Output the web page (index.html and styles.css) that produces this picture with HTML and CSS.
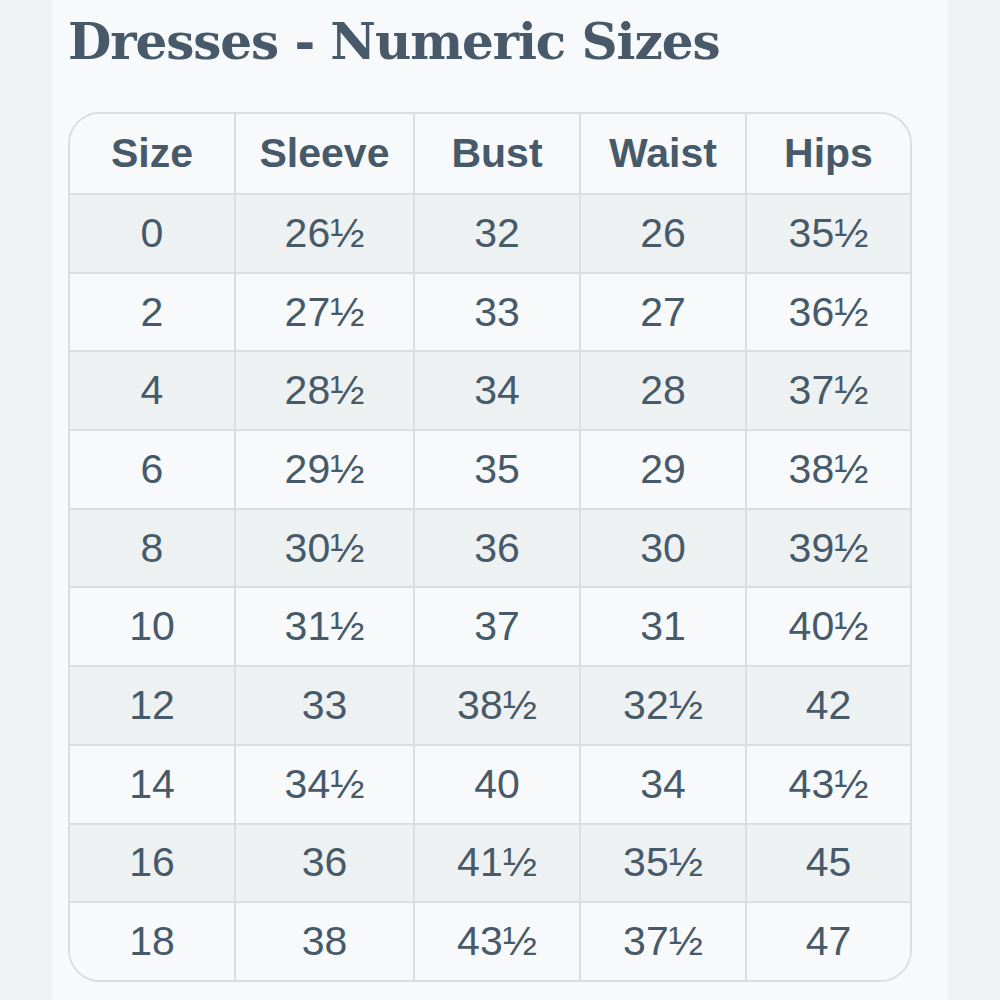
FILE: index.html
```html
<!DOCTYPE html>
<html>
<head>
<meta charset="utf-8">
<link rel="stylesheet" href="styles.css">
</head>
<body>
<div class="page">
  <h1 class="title">Dresses - Numeric Sizes</h1>
  <table class="chart">
    <colgroup>
      <col class="c1"><col class="c2"><col class="c3"><col class="c4"><col class="c5">
    </colgroup>
    <thead>
      <tr><th>Size</th><th>Sleeve</th><th>Bust</th><th>Waist</th><th>Hips</th></tr>
    </thead>
    <tbody>
      <tr><td>0</td><td>26½</td><td>32</td><td>26</td><td>35½</td></tr>
      <tr><td>2</td><td>27½</td><td>33</td><td>27</td><td>36½</td></tr>
      <tr><td>4</td><td>28½</td><td>34</td><td>28</td><td>37½</td></tr>
      <tr><td>6</td><td>29½</td><td>35</td><td>29</td><td>38½</td></tr>
      <tr><td>8</td><td>30½</td><td>36</td><td>30</td><td>39½</td></tr>
      <tr><td>10</td><td>31½</td><td>37</td><td>31</td><td>40½</td></tr>
      <tr><td>12</td><td>33</td><td>38½</td><td>32½</td><td>42</td></tr>
      <tr><td>14</td><td>34½</td><td>40</td><td>34</td><td>43½</td></tr>
      <tr><td>16</td><td>36</td><td>41½</td><td>35½</td><td>45</td></tr>
      <tr><td>18</td><td>38</td><td>43½</td><td>37½</td><td>47</td></tr>
    </tbody>
  </table>
</div>
</body>
</html>
```
FILE: styles.css
```css
html, body {
  margin: 0;
  padding: 0;
  background: #eff1f3;
}
.page {
  width: 896px;
  min-height: 1000px;
  margin: 0 auto;
  box-sizing: border-box;
  padding: 0 16px;
  background: #f7f9fb;
  color: #475a69;
}
.title {
  margin: 0;
  padding-top: 12px;
  height: 112px;
  box-sizing: border-box;
  font-family: "DejaVu Serif", serif;
  font-weight: bold;
  font-size: 50px;
  line-height: 60px;
  letter-spacing: -1.1px;
  color: #485a6a;
}
.chart {
  width: 844px;
  table-layout: fixed;
  border-collapse: separate;
  border-spacing: 0;
  border: 2px solid #dcdddf;
  border-radius: 32px;
  overflow: hidden;
  font-family: "Liberation Sans", Arial, sans-serif;
  font-size: 41px;
  color: #475a69;
}
.c1 { width: 166px; }
.c2 { width: 179px; }
.c3 { width: 166px; }
.c4 { width: 166px; }
.c5 { width: 163px; }
.chart th, .chart td {
  padding: 0;
  text-align: center;
  vertical-align: middle;
  border-right: 2px solid #dcdddf;
  box-sizing: border-box;
}
.chart th:last-child, .chart td:last-child {
  border-right: none;
}
.chart th {
  height: 79px;
  font-weight: bold;
  background: #f7f9fb;
}
.chart td {
  height: 78.7px;
  border-top: 2px solid #dcdddf;
  background: #f7f9fb;
}
.chart tbody tr:nth-child(odd) td {
  background: #eef1f2;
}
```
